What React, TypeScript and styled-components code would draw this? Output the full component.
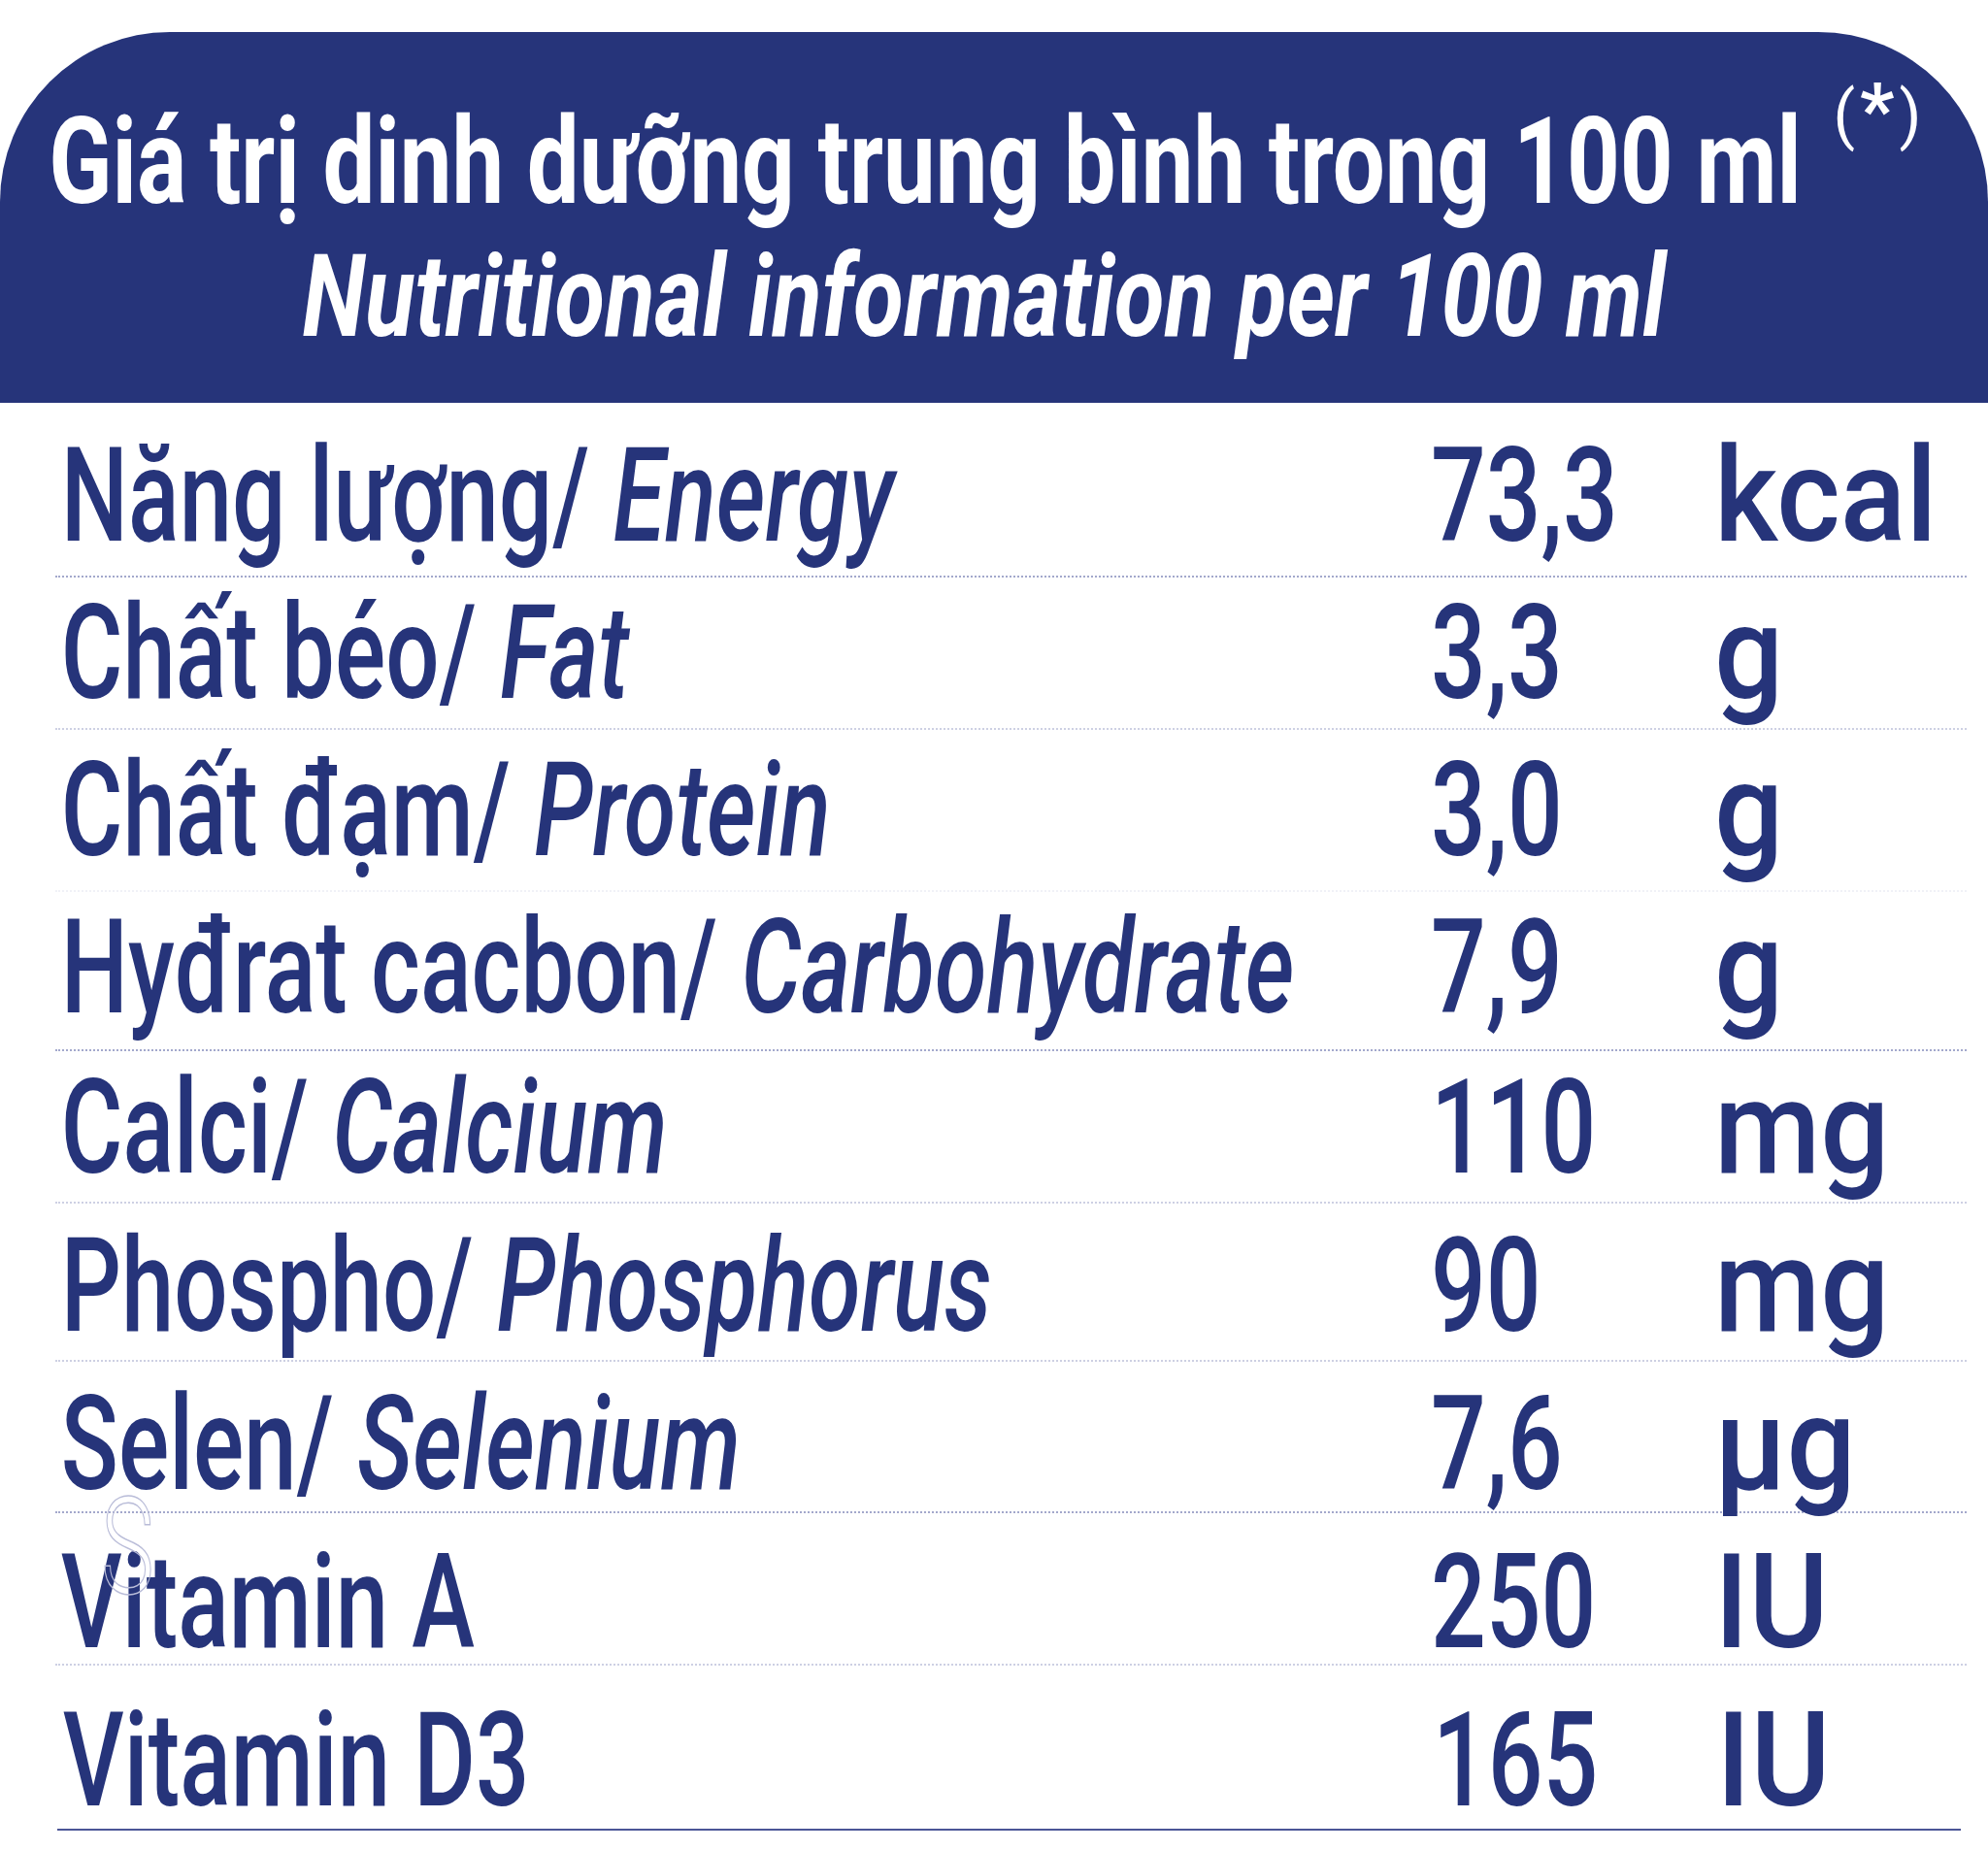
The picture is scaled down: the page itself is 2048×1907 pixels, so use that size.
import React from "react";
import styled, { createGlobalStyle } from "styled-components";

const NAVY = "#26347a";
const FONT = `Roboto, "Liberation Sans", Arial, sans-serif`;

const Global = createGlobalStyle`
  html, body { margin: 0; padding: 0; background: #ffffff; }
  body { font-family: ${FONT}; }
`;

const Page = styled.div`
  position: relative;
  width: 2048px;
  height: 1907px;
  box-sizing: border-box;
  padding-top: 33px;
  overflow: hidden;
  background: #ffffff;
`;

const Header = styled.header`
  height: 382px;
  box-sizing: border-box;
  background: ${NAVY};
  border-radius: 175px 175px 0 0;
  padding: 69px 20px 0 0;
  display: flex;
  flex-direction: column;
  align-items: center;
  color: #ffffff;
  font-family: ${FONT};
  font-weight: 700;
`;

const TitleLine = styled.div<{ $size: number; $scale: number; $italic?: boolean; $gap?: number; $shift?: number }>`
  font-size: ${(p) => p.$size}px;
  line-height: 130px;
  font-style: ${(p) => (p.$italic ? "italic" : "normal")};
  white-space: nowrap;
  margin-top: ${(p) => p.$gap ?? 0}px;
  transform: translateX(${(p) => p.$shift ?? 0}px) scaleX(${(p) => p.$scale});
  transform-origin: center;
`;

const Sup = styled.span<{ $inv: number }>`
  display: inline-block;
  margin-left: 42px;
  font-size: 66px;
  font-weight: 400;
  font-style: normal;
  line-height: 0;
  letter-spacing: 5px;
  vertical-align: 68px;
  transform: scaleX(${(p) => p.$inv});
  transform-origin: left center;
`;

const Star = styled.span`
  font-weight: 700;
  font-size: 78px;
`;

const Table = styled.section`
  padding: 0 22px 0 57px;
  color: ${NAVY};
  font-family: ${FONT};
`;

type LineKind = "strong" | "light" | "faint" | "solid";

const lineColor: Record<LineKind, string> = {
  strong: "#a3a8cc",
  light: "#cdd0e3",
  faint: "#f0f1f7",
  solid: "#4b5596",
};

const Row = styled.div<{ $pt: number; $pb: number; $line: LineKind }>`
  display: grid;
  grid-template-columns: 1417px 292px 1fr;
  padding-top: ${(p) => p.$pt}px;
  padding-bottom: ${(p) => p.$pb}px;
  border-bottom: 2px ${(p) => (p.$line === "solid" ? "solid" : "dotted")} ${(p) => lineColor[p.$line]};
  margin-right: ${(p) => (p.$line === "solid" ? 6 : 0)}px;
  margin-left: ${(p) => (p.$line === "solid" ? 2 : 0)}px;
  font-size: 135px;
  line-height: 120px;
  font-weight: 500;
`;

const Cell = styled.div<{ $scale: number; $indent?: number }>`
  white-space: nowrap;
  padding-left: ${(p) => p.$indent ?? 0}px;
  transform: scaleX(${(p) => p.$scale});
  transform-origin: left center;
`;

const Em = styled.span`
  font-style: italic;
`;

const Ghost = styled.span`
  position: absolute;
  left: 104px;
  top: 1524px;
  font-family: ${FONT};
  font-size: 140px;
  line-height: 1;
  font-weight: 300;
  color: transparent;
  -webkit-text-stroke: 1.5px #b9bcd8;
  transform: scaleX(0.66);
  transform-origin: left top;
  pointer-events: none;
`;

type Item = {
  vi: string;
  en?: string;
  value: string;
  unit: string;
  pt: number;
  pb: number;
  line: LineKind;
};

const items: Item[] = [
  { vi: "Năng lượng/ ", en: "Energy", value: "73,3", unit: "kcal", pt: 36, pb: 22, line: "strong" },
  { vi: "Chất béo/ ", en: "Fat", value: "3,3", unit: "g", pt: 18, pb: 17, line: "light" },
  { vi: "Chất đạm/ ", en: "Protein", value: "3,0", unit: "g", pt: 23, pb: 22, line: "faint" },
  { vi: "Hyđrat cacbon/ ", en: "Carbohydrate", value: "7,9", unit: "g", pt: 18, pb: 24, line: "strong" },
  { vi: "Calci/ ", en: "Calcium", value: "110", unit: "mg", pt: 19, pb: 16, line: "light" },
  { vi: "Phospho/ ", en: "Phosphorus", value: "90", unit: "mg", pt: 25, pb: 16, line: "light" },
  { vi: "Selen/ ", en: "Selenium", value: "7,6", unit: "µg", pt: 25, pb: 9, line: "strong" },
  { vi: "Vitamin A", value: "250", unit: "IU", pt: 32, pb: 3, line: "light" },
  { vi: "Vitamin D3", value: "165", unit: "IU", pt: 38, pb: 10, line: "solid" },
];

const T1 = 0.772;

export default function App() {
  return (
    <>
      <Global />
      <Page>
        <Header>
          <TitleLine $size={124} $scale={T1} $shift={-8}>
            Giá trị dinh dưỡng trung bình trong 100 ml
            <Sup $inv={1 / T1}>
              (<Star>*</Star>)
            </Sup>
          </TitleLine>
          <TitleLine $size={118} $scale={0.8} $italic $gap={9}>
            Nutritional information per 100 ml
          </TitleLine>
        </Header>
        <Table>
          {items.map((it) => (
            <Row key={it.vi} $pt={it.pt} $pb={it.pb} $line={it.line}>
              <Cell $scale={0.723} $indent={8}>
                {it.vi}
                {it.en && <Em>{it.en}</Em>}
              </Cell>
              <Cell $scale={0.74}>{it.value}</Cell>
              <Cell $scale={0.93}>{it.unit}</Cell>
            </Row>
          ))}
        </Table>
        <Ghost>S</Ghost>
      </Page>
    </>
  );
}
